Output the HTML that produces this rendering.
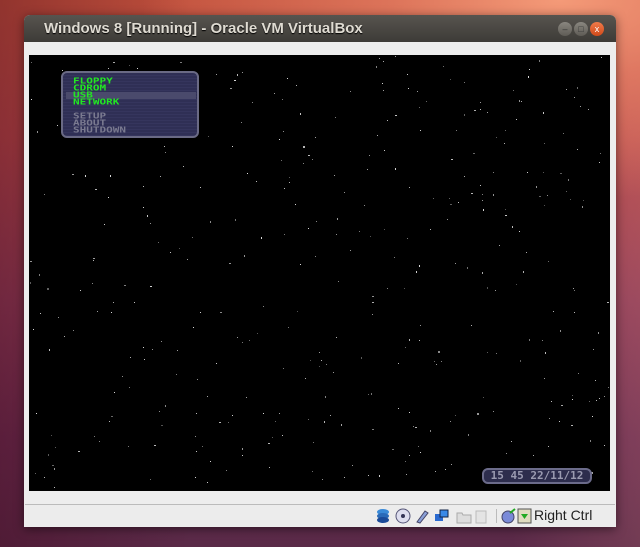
<!DOCTYPE html>
<html><head><meta charset="utf-8"><style>
*{margin:0;padding:0;box-sizing:border-box}
body{width:640px;height:547px;overflow:hidden;position:relative;font-family:"Liberation Sans","DejaVu Sans",sans-serif;
background:linear-gradient(180deg,#c0503c 0%,#b44848 25%,#8c3c56 55%,#6a2e50 80%,#5a2a48 100%);}
#bg2{position:absolute;inset:0;background:radial-gradient(ellipse 420px 200px at 560px 0px,#f49a78 0%,rgba(240,140,110,0.6) 40%,rgba(0,0,0,0) 100%),linear-gradient(90deg,rgba(60,0,20,0.35) 0%,rgba(0,0,0,0) 30%,rgba(0,0,0,0) 80%,rgba(255,160,150,0.15) 100%);}
#win{position:absolute;left:24px;top:15px;width:592px;height:512px;background:#ededed;border-radius:6px 6px 0 0;box-shadow:0 2px 10px rgba(0,0,0,0.5);}
#title{height:27px;background:linear-gradient(#57544f,#3d3b37);border-radius:6px 6px 0 0;color:#dfdbd2;font-weight:bold;font-size:15px;line-height:27px;padding-left:20px;text-shadow:0 1px 1px #000}
.btn{position:absolute;top:7px;width:14px;height:14px;border-radius:7px;background:linear-gradient(#8a8780,#5e5b55);font-size:9px;color:#333;text-align:center;line-height:14px}
#screen{position:absolute;left:5px;top:40px;width:581px;height:436px;background:#000;overflow:hidden}
#status{position:absolute;left:1px;top:489px;width:590px;height:22px;border-top:1px solid #bbb;background:#ececec}
#menu{position:absolute;left:32px;top:16px;width:138px;height:67px;background:repeating-linear-gradient(#2f2f55 0,#2f2f55 2px,#35355d 2px,#35355d 3px);border:2px solid #6a6a85;border-radius:6px}
.m{position:absolute;left:10px;font-family:"DejaVu Sans Mono",monospace;font-weight:bold;font-size:11px;line-height:8px;letter-spacing:0px;transform:scaleY(0.75);transform-origin:0 0}
#clock{position:absolute;left:453px;top:413px;width:110px;height:16px;border:2px solid #6b6b8a;border-radius:6px;background:#2d2d4d;color:#9a9ab0;font-family:"DejaVu Sans Mono",monospace;font-size:11px;line-height:12px;text-align:center;font-weight:bold}
</style></head><body>
<div id="bg2"></div>
<div id="win">
<div id="title">Windows 8 [Running] - Oracle VM VirtualBox</div>
<div class="btn" style="left:534px">–</div>
<div class="btn" style="left:550px">□</div>
<div class="btn" style="left:566px;background:linear-gradient(#f07a4a,#d04a1a);color:#fff">x</div>
<div id="screen">
<svg id="stars" width="581" height="436" style="position:absolute;left:0;top:0"></svg>
<div id="menu">
<div style="position:absolute;left:3px;top:19px;width:130px;height:7px;background:#4a4a6c"></div>
<div class="m" style="top:5px;color:#22e822">FLOPPY</div>
<div class="m" style="top:12px;color:#22e822">CDROM</div>
<div class="m" style="top:19px;color:#22e822">USB</div>
<div class="m" style="top:26px;color:#22e822">NETWORK</div>
<div class="m" style="top:40px;color:#7a7a90">SETUP</div>
<div class="m" style="top:47px;color:#7a7a90">ABOUT</div>
<div class="m" style="top:54px;color:#7a7a90">SHUTDOWN</div>
</div>
<div id="clock">15 45 22/11/12</div>
</div>
<div id="status">
<svg style="position:absolute;left:350px;top:3px" width="130" height="16">
<g><ellipse cx="8" cy="4" rx="6" ry="3" fill="#3a8ad8"/><ellipse cx="8" cy="8" rx="6" ry="3" fill="#2a6ab8"/><ellipse cx="8" cy="12" rx="6" ry="3" fill="#1a4a98"/></g>
<circle cx="28" cy="8" r="7" fill="#dde" stroke="#557" /><circle cx="28" cy="8" r="2" fill="#335"/>
<path d="M42 14 L50 3 L53 5 L45 15 Z" fill="#8aa0d8" stroke="#446"/>
<rect x="60" y="6" width="8" height="7" fill="#2a6ad0"/><rect x="65" y="2" width="8" height="7" fill="#3a8ae8" stroke="#124"/>
<path d="M82 5h5l1 2h8v8h-14z" fill="#ddd" stroke="#aaa"/>
<rect x="101" y="3" width="10" height="12" fill="#e4e4e4" stroke="#bbb"/>
</svg>
<div style="position:absolute;left:471px;top:4px;width:1px;height:14px;background:#bbb"></div>
<svg style="position:absolute;left:475px;top:2px" width="40" height="18"><ellipse cx="8" cy="10" rx="6" ry="6" fill="#7a8ad8" stroke="#446"/><path d="M10 6 L15 2" stroke="#2a2" stroke-width="2"/>
<rect x="18" y="2" width="13" height="14" fill="#e0dcc0" stroke="#555"/><path d="M21 7h7l-3.5 5z" fill="#2a2"/></svg>
<div style="position:absolute;left:509px;top:2px;font-size:14px;color:#222">Right Ctrl</div>
</div>
</div>
<script>
var s=12345;function r(){s=(s*1103515245+12345)%2147483648;return s/2147483648;}
var svg=document.getElementById('stars'),h='';
for(var i=0;i<380;i++){var x=Math.floor(r()*581),y=Math.floor(r()*436),b=Math.floor(80+r()*140),w=r()<0.1?2:1;h+='<rect x="'+x+'" y="'+y+'" width="'+w+'" height="'+(r()<0.15?2:1)+'" fill="rgb('+b+','+b+','+b+')"/>';}
svg.innerHTML=h;
</script>
</body></html>
